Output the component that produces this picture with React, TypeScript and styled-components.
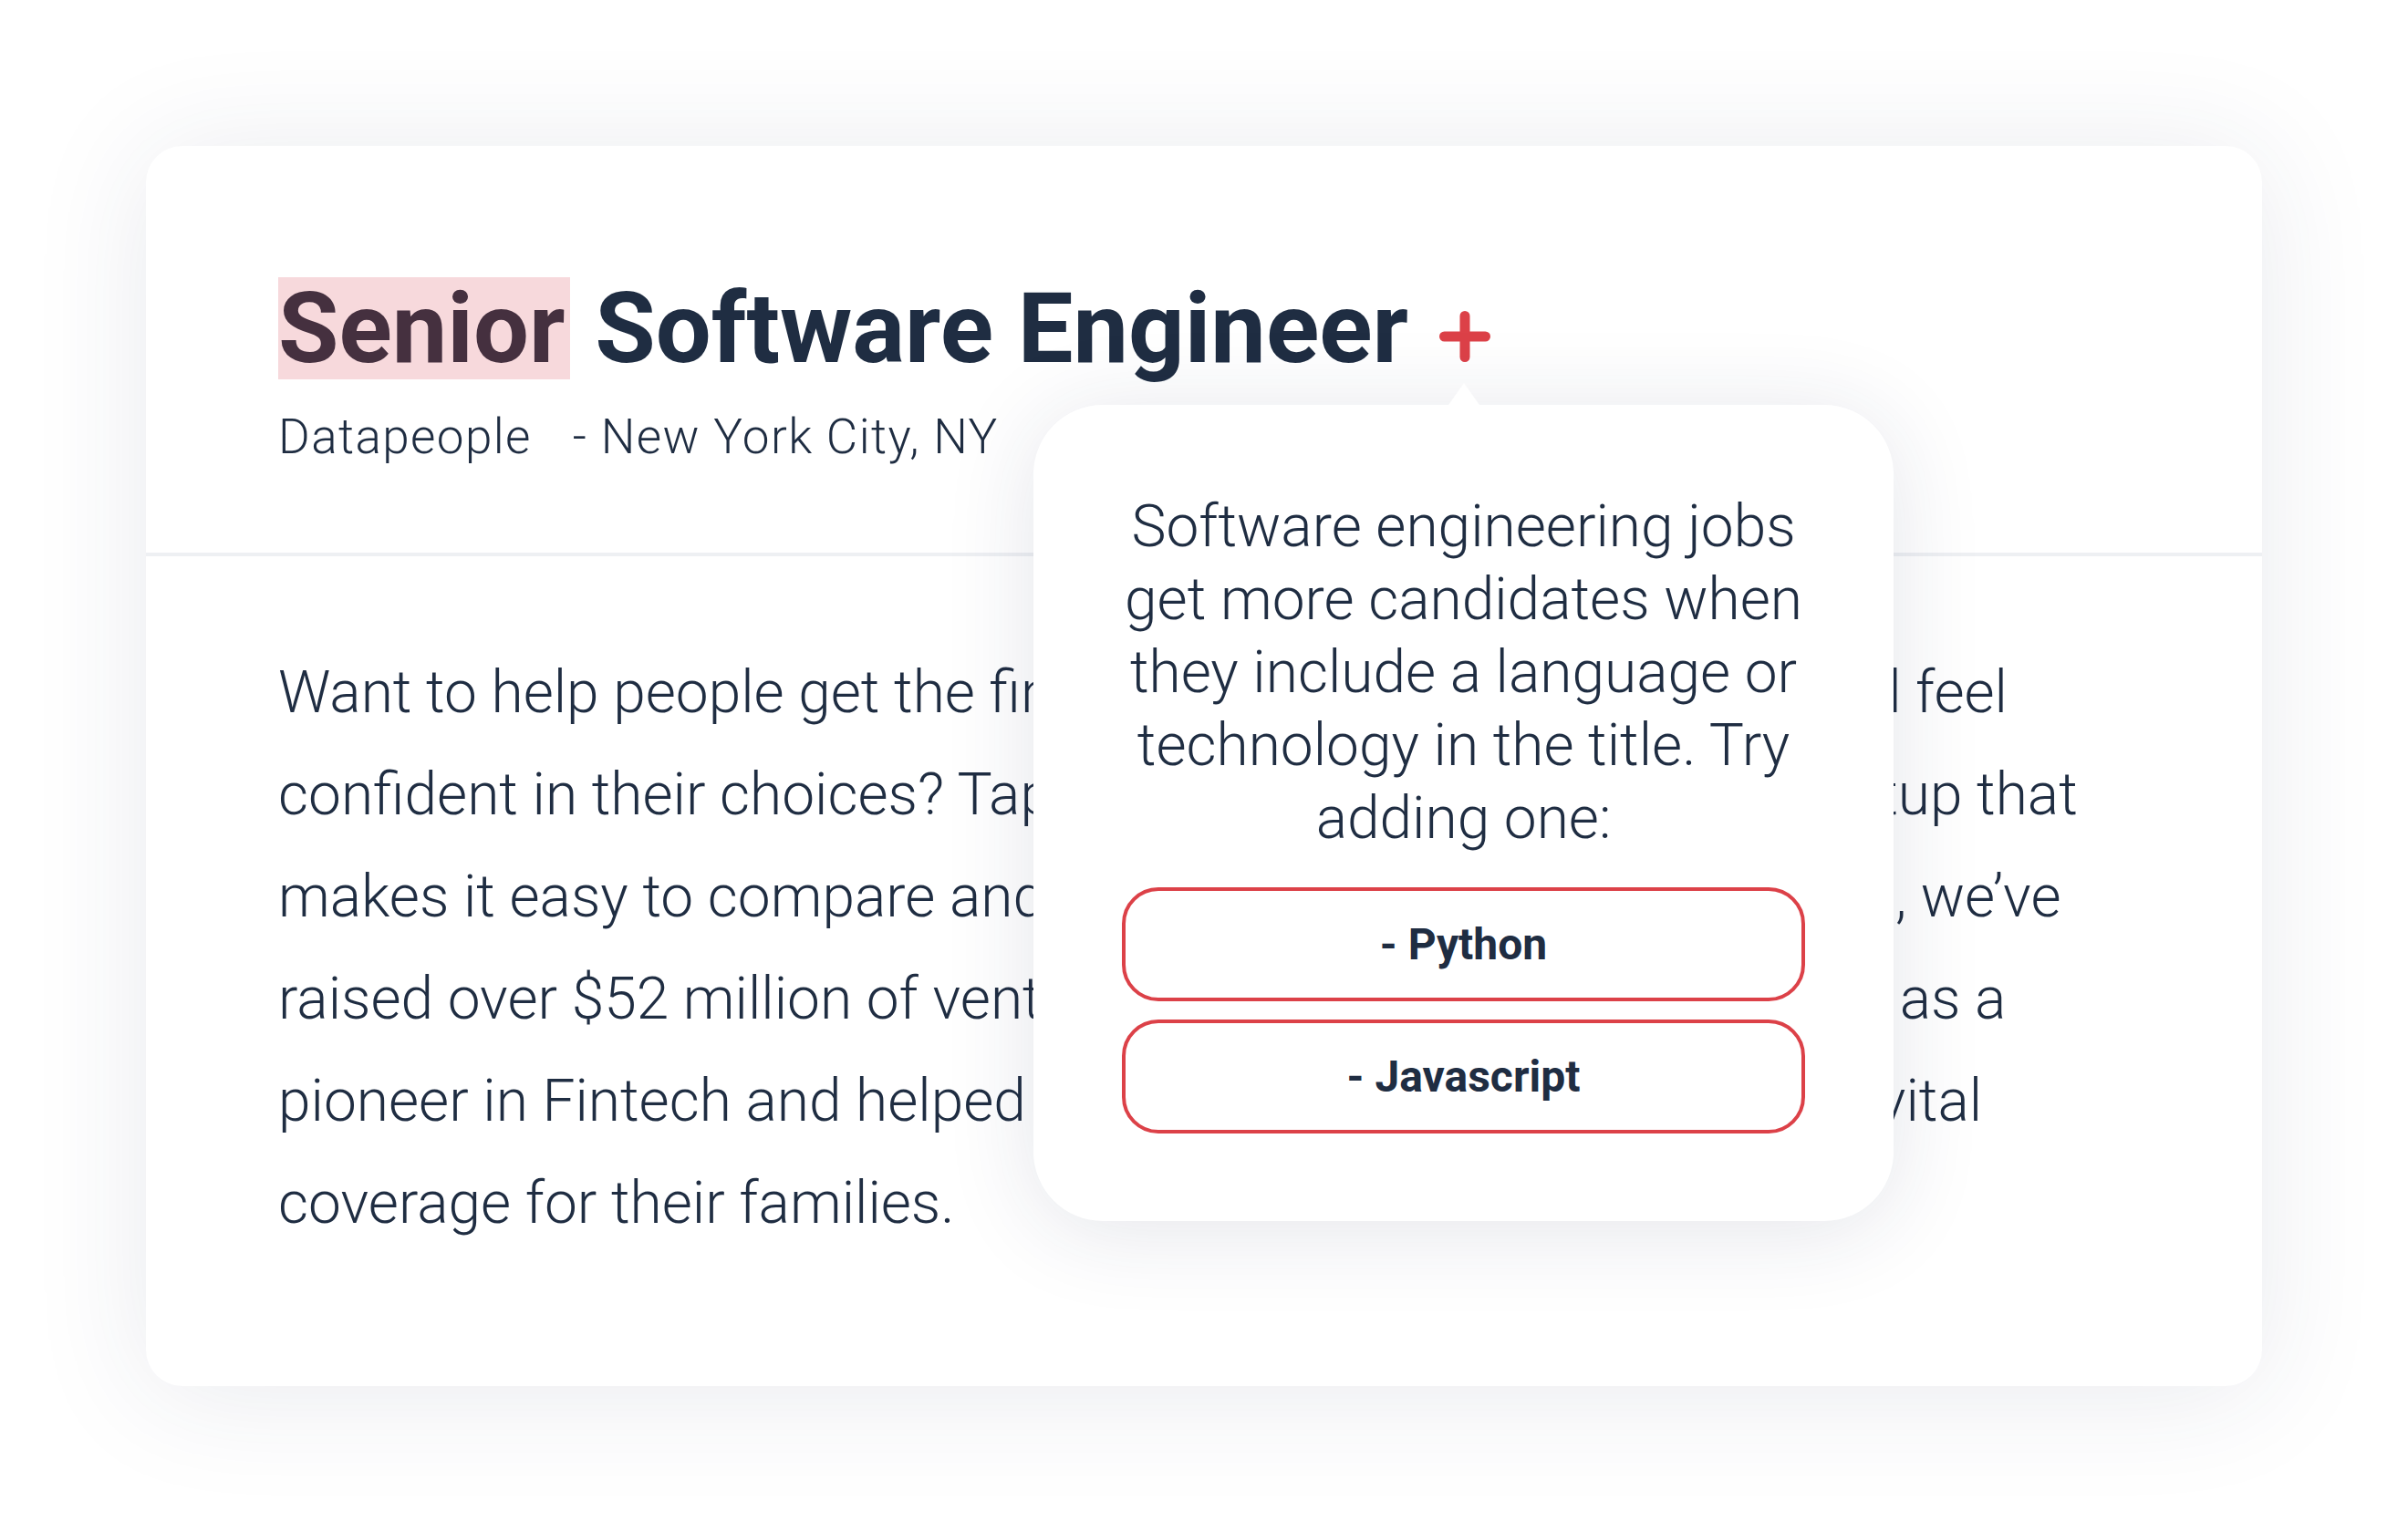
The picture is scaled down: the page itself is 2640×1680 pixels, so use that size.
import React from "react";
import styled, { createGlobalStyle } from "styled-components";

const GlobalStyle = createGlobalStyle`
  html, body {
    margin: 0;
    padding: 0;
    background: #ffffff;
  }
  body {
    font-family: Roboto, "Liberation Sans", Arial, sans-serif;
    color: #1f2d42;
    -webkit-font-smoothing: antialiased;
  }
`;

const suggestions = ["Python", "Javascript"];

// the description is laid out line by line, as it is in the job post preview
const descriptionLines = [
  "Want to help people get the financial protection they require and feel",
  "confident in their choices? Tap into an insurance exchange startup that",
  "makes it easy to compare and get coverage. Since our founding, we’ve",
  "raised over $52 million of venture funding, and been recognized as a",
  "pioneer in Fintech and helped millions of Americans obtain the vital",
  "coverage for their families.",
];

const App: React.FC = () => {
  return (
    <>
      <GlobalStyle />
      <Page>
        <Card>
          <Header>
            <Title>
              <Flagged>Senior</Flagged> Software Engineer
              <PlusIcon viewBox="0 0 56 56" aria-hidden="true">
                <path d="M28 5.5v45M5.5 28h45" />
              </PlusIcon>
            </Title>
            <Meta>
              <Company>Datapeople</Company>
              <Location>- New York City, NY</Location>
            </Meta>
          </Header>

          <Body>
            <Description>
              {descriptionLines.map((line, i) => (
                <React.Fragment key={i}>
                  {line}
                  {i < descriptionLines.length - 1 && <br />}
                </React.Fragment>
              ))}
            </Description>
          </Body>

          <Popover role="dialog">
            <Hint>
              Software engineering jobs get more candidates when they include a
              language or technology in the title. Try adding one:
            </Hint>
            <Options>
              {suggestions.map((s) => (
                <OptionButton key={s} type="button">
                  - {s}
                </OptionButton>
              ))}
            </Options>
          </Popover>
        </Card>
      </Page>
    </>
  );
};

export default App;

const Page = styled.div`
  min-height: 100vh;
  box-sizing: border-box;
  padding: 160px;
  background: #ffffff;
`;

const Card = styled.article`
  position: relative;
  box-sizing: border-box;
  min-height: 1360px;
  background: #ffffff;
  border-radius: 40px;
  box-shadow: 0 8px 130px rgba(35, 50, 90, 0.1);
`;

const Header = styled.header`
  padding: 144px 145px 95px;
  border-bottom: 4px solid #eef0f3;
`;

const Title = styled.h1`
  margin: 0;
  font-size: 108px;
  line-height: 108px;
  font-weight: 700;
  color: #1f2d42;
`;

const Flagged = styled.span`
  display: inline-block;
  padding: 2px 6px 2px 0;
  background: #f7d9dc;
  color: #45303f;
`;

const PlusIcon = styled.svg`
  width: 56px;
  height: 56px;
  margin-left: 34px;
  vertical-align: baseline;
  fill: none;
  stroke: #dc4148;
  stroke-width: 11;
  stroke-linecap: round;
`;

const Meta = styled.p`
  margin: 31px 0 0;
  font-size: 53px;
  line-height: 64px;
  font-weight: 300;
  letter-spacing: 1.4px;
  color: #1f2d42;
`;

const Company = styled.span`
  margin-right: 45px;
`;

const Location = styled.span``;

const Body = styled.section`
  padding: 94px 145px 0;
`;

const Description = styled.p`
  margin: 0;
  font-size: 64px;
  line-height: 112px;
  font-weight: 300;
  color: #1f2d42;
  white-space: nowrap;
`;

const Popover = styled.div`
  position: absolute;
  top: 284px;
  left: 973px;
  width: 943px;
  box-sizing: border-box;
  padding: 94px 97px 96px;
  background: #ffffff;
  border-radius: 76px;
  box-shadow: 0 10px 100px rgba(30, 45, 80, 0.12);
  text-align: center;

  &::before {
    content: "";
    position: absolute;
    top: -24px;
    left: 50%;
    transform: translateX(-50%);
    border-left: 17px solid transparent;
    border-right: 17px solid transparent;
    border-bottom: 24px solid #ffffff;
  }
`;

const Hint = styled.p`
  margin: 0 0 35px;
  font-size: 64px;
  line-height: 80px;
  font-weight: 300;
  color: #1f2d42;
`;

const Options = styled.div`
  display: flex;
  flex-direction: column;
  gap: 20px;
`;

const OptionButton = styled.button`
  width: 100%;
  height: 125px;
  box-sizing: border-box;
  border: 4px solid #dc4148;
  border-radius: 40px;
  background: #ffffff;
  font-family: Roboto, "Liberation Sans", Arial, sans-serif;
  font-size: 48px;
  font-weight: 700;
  color: #1f2d42;
  cursor: pointer;
`;
